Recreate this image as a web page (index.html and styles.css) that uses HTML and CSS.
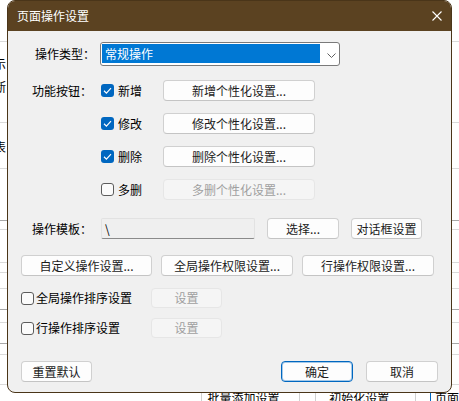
FILE: index.html
```html
<!DOCTYPE html>
<html lang="zh-CN">
<head>
<meta charset="utf-8">
<title>页面操作设置</title>
<link rel="stylesheet" href="styles.css">
</head>
<body>
<div class="backdrop">
  <div class="bg-row r1"></div>
  <div class="bg-row r2"><div class="bg-text">示</div><div class="bg-text">断</div></div>
  <div class="bg-row r3"><div class="bg-text">表</div></div>
  <div class="bg-row r4 dark"></div>
  <div class="bg-row r5"></div>
  <div class="bg-row r6"></div>
  <div class="bg-row r7"></div>
  <div class="bg-row r8"></div>
  <div class="bg-row r9 dark"></div>
  <div class="bg-row r10"></div>
  <div class="bg-row r11 dark"></div>
  <div class="bg-row r12"></div>
  <div class="bg-fill"></div>
  <div class="bg-bar">
    <div class="bg-cell c1"></div>
    <div class="bg-cell c2">批量添加设置...</div>
    <div class="bg-cell c3"></div>
    <div class="bg-cell c4">初始化设置...</div>
    <div class="bg-cell c5"></div>
    <div class="bg-cell c6">页面</div>
  </div>
</div>

<div class="dialog">
  <div class="titlebar">
    <span class="title">页面操作设置</span>
    <svg class="close" width="10" height="10" viewBox="0 0 10 10"><path d="M0.5 0.5 L9.5 9.5 M9.5 0.5 L0.5 9.5" stroke="#fff" stroke-width="1.1" fill="none"/></svg>
  </div>
  <div class="body">
    <div class="form">
      <div class="row row-type">
        <div class="label label-first">操作类型：</div>
        <div class="select">
          <div class="select-value">常规操作</div>
          <svg class="chev" width="9" height="5" viewBox="0 0 9 5"><polyline points="0.5,0.5 4.5,4.5 8.5,0.5" stroke="#606060" stroke-width="1" fill="none"/></svg>
        </div>
      </div>

      <div class="row row-func">
        <div class="label label-func">功能按钮：</div>
        <div class="func-list">
          <div class="func-item">
            <label class="check"><span class="box on"><svg width="13" height="13" viewBox="0 0 13 13"><polyline points="3,6.8 5.4,9.1 10,4.2" stroke="#fff" stroke-width="1.2" fill="none"/></svg></span><span class="check-text">新增</span></label>
            <button class="btn btn-func">新增个性化设置...</button>
          </div>
          <div class="func-item">
            <label class="check"><span class="box on"><svg width="13" height="13" viewBox="0 0 13 13"><polyline points="3,6.8 5.4,9.1 10,4.2" stroke="#fff" stroke-width="1.2" fill="none"/></svg></span><span class="check-text">修改</span></label>
            <button class="btn btn-func">修改个性化设置...</button>
          </div>
          <div class="func-item">
            <label class="check"><span class="box on"><svg width="13" height="13" viewBox="0 0 13 13"><polyline points="3,6.8 5.4,9.1 10,4.2" stroke="#fff" stroke-width="1.2" fill="none"/></svg></span><span class="check-text">删除</span></label>
            <button class="btn btn-func">删除个性化设置...</button>
          </div>
          <div class="func-item">
            <label class="check"><span class="box"></span><span class="check-text">多删</span></label>
            <button class="btn btn-func" disabled>多删个性化设置...</button>
          </div>
        </div>
      </div>

      <div class="row row-tpl">
        <div class="label">操作模板：</div>
        <div class="field">\</div>
        <button class="btn btn-choose">选择...</button>
        <button class="btn btn-dlg">对话框设置</button>
      </div>
    </div>

    <div class="lower">
      <div class="btn-row">
        <button class="btn btn-wide">自定义操作设置...</button>
        <button class="btn btn-wide">全局操作权限设置...</button>
        <button class="btn btn-wide">行操作权限设置...</button>
      </div>
      <div class="sort-row sort-1">
        <label class="check check-sort"><span class="box"></span><span class="check-text">全局操作排序设置</span></label>
        <button class="btn btn-set" disabled>设置</button>
      </div>
      <div class="sort-row sort-2">
        <label class="check check-sort"><span class="box"></span><span class="check-text">行操作排序设置</span></label>
        <button class="btn btn-set" disabled>设置</button>
      </div>
    </div>

    <div class="footer">
      <button class="btn btn-foot">重置默认</button>
      <div class="footer-right">
        <button class="btn btn-foot btn-default">确定</button>
        <button class="btn btn-foot">取消</button>
      </div>
    </div>
  </div>
</div>
</body>
</html>
```

FILE: styles.css
```css
* { box-sizing: border-box; }

html, body {
  margin: 0;
  padding: 0;
}

body {
  width: 459px;
  height: 401px;
  overflow: hidden;
  background: #ffffff;
  position: relative;
  font-family: "Noto Sans CJK SC", "Noto Sans", sans-serif;
  font-size: 12px;
  line-height: 1;
  color: #000;
}

/* ---------- backdrop (page behind the dialog) ---------- */
.backdrop {
  width: 459px;
  height: 401px;
  overflow: hidden;
}

.bg-row {
  border-bottom: 1px solid #dadada;
}
.bg-row.dark { border-bottom-color: #a8a8a8; }
.r1 { height: 42px; }
.r2 { height: 81px; padding-top: 10px; }
.r3 { height: 46px; padding-top: 12px; }
.r4 { height: 52px; }
.r5 { height: 9px; }
.r6 { height: 33px; }
.r7 { height: 10px; }
.r8 { height: 16px; }
.r9 { height: 21px; }
.r10 { height: 13px; }
.r11 { height: 21px; }
.r12 { height: 11px; }
.bg-fill { height: 29px; }

.bg-text {
  height: 23px;
  line-height: 23px;
  margin-left: -6px;
}

.bg-bar {
  display: flex;
  height: 26px;
  border-top: 1px solid #dadada;
}
.bg-cell {
  height: 100%;
  line-height: 26px;
  white-space: nowrap;
  border-right: 1px solid #d0d0d0;
}
.c1 { width: 202px; }
.c2 { width: 99px; padding-left: 6px; }
.c3 { width: 16px; }
.c4 { width: 100px; padding-left: 13px; }
.c5 { width: 15px; border-right: 1px solid #0067c0; }
.c6 { flex: 1; padding-left: 4px; border-right: none; }

/* ---------- dialog ---------- */
.dialog {
  position: absolute;
  left: 7px;
  top: 0;
  width: 445px;
  height: 393px;
  border: 1px solid #4a3519;
  border-radius: 8px;
  overflow: hidden;
  background: #f0f0f0;
  display: flex;
  flex-direction: column;
}

.titlebar {
  height: 30px;
  flex: none;
  background: #5b4221;
  color: #fff;
  display: flex;
  align-items: center;
  justify-content: space-between;
  padding: 0 9px 0 9px;
}
.title {
  font-size: 12px;
  letter-spacing: 0;
}
.close { display: block; margin-top: -1px; }

.body {
  flex: 1;
  display: flex;
  flex-direction: column;
  padding: 11px 13px 10px 13px;
}

/* top form */
.form {
  padding-left: 11px;
}
.row {
  display: flex;
  align-items: center;
}
.label {
  width: 68px;
  flex: none;
  white-space: nowrap;
}
.label-first { padding-left: 3px; }

.row-type { height: 24px; }

.select {
  width: 240px;
  height: 24px;
  border: 1px solid #7a7a7a;
  border-radius: 3px;
  background: #fff;
  display: flex;
  align-items: flex-start;
  padding: 1px 0 0 1px;
}
.select-value {
  width: 218px;
  height: 19px;
  background: #0078d4;
  color: #fff;
  line-height: 19px;
  padding-left: 3px;
}
.chev {
  display: block;
  margin: 9px 0 0 7px;
}

.row-func {
  align-items: flex-start;
  margin-top: 14px;
}
.label-func {
  height: 21px;
  line-height: 21px;
}
.func-list {
  display: flex;
  flex-direction: column;
  gap: 12px;
}
.func-item {
  display: flex;
  align-items: center;
  height: 21px;
}
.func-item .check {
  width: 63px;
  padding-left: 1px;
}

.check {
  display: flex;
  align-items: center;
  gap: 4px;
  white-space: nowrap;
}
.box {
  width: 13px;
  height: 13px;
  flex: none;
  border: 1px solid #5c5c5c;
  border-radius: 3px;
  background: #fbfbfb;
  display: block;
}
.box.on {
  border: none;
  background: #0067c0;
}
.box svg { display: block; }

.btn {
  font-family: inherit;
  font-size: 12px;
  line-height: 1;
  color: #1b1b1b;
  height: 21px;
  padding: 0;
  margin: 0;
  border: 1px solid #d0d0d0;
  border-bottom-color: #c4c4c4;
  border-radius: 4px;
  background: #fdfdfd;
  white-space: nowrap;
}
.btn:disabled {
  background: #f5f5f5;
  border-color: #e6e6e6;
  color: #a0a0a0;
}

.btn-func { width: 152px; }

.row-tpl {
  margin-top: 18px;
  height: 21px;
}
.field {
  width: 154px;
  height: 21px;
  margin-left: 1px;
  border: 1px solid #e2e2e2;
  border-bottom: 1px solid #8a8a8a;
  border-radius: 2px;
  background: #efefef;
  line-height: 19px;
  padding-left: 3px;
}
.btn-choose { width: 72px; margin-left: 12px; }
.btn-dlg { width: 71px; margin-left: 12px; }

/* lower section */
.lower {
  margin-top: 16px;
}
.btn-row {
  display: flex;
  gap: 9px;
}
.btn-wide { width: 132px; }
.btn-row .btn-wide:first-child { width: 131px; }

.sort-row {
  display: flex;
  align-items: center;
  height: 20px;
}
.sort-1 { margin-top: 12px; }
.sort-2 { margin-top: 10px; }
.check-sort {
  width: 130px;
  gap: 2px;
}
.btn-set {
  width: 71px;
  height: 20px;
}

/* footer */
.footer {
  margin-top: auto;
  display: flex;
  justify-content: space-between;
  align-items: center;
}
.footer-right {
  display: flex;
  gap: 13px;
}
.btn-foot { width: 72px; }
.footer > .btn-foot { width: 71px; }
.btn-default {
  border: 1px solid #0067c0;
  box-shadow: inset 0 0 0 1px rgba(0, 103, 192, 0.35);
}
```
